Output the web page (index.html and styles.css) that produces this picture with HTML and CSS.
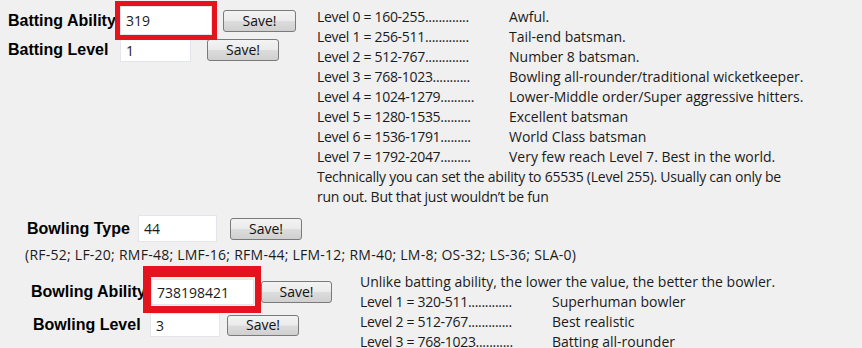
FILE: index.html
```html
<!DOCTYPE html>
<html>
<head>
<meta charset="utf-8">
<link rel="stylesheet" href="styles.css">
</head>
<body>
<div class="top">
  <div class="top-left">
    <div class="row row-bat-ability">
      <label class="lbl lbl-bat-ability">Batting Ability</label>
      <span class="hl hl-one"><input class="field field-bat-ability" value="319"></span>
      <button class="btn btn-bat-ability">Save!</button>
    </div>
    <div class="row row-bat-level">
      <label class="lbl lbl-bat-level">Batting Level</label>
      <input class="field field-bat-level" value="1">
      <button class="btn btn-bat-level">Save!</button>
    </div>
  </div>
  <div class="info info-bat">
    <span class="rng">Level 0 = 160-255.............</span><span>Awful.</span>
    <span class="rng">Level 1 = 256-511.............</span><span>Tail-end batsman.</span>
    <span class="rng">Level 2 = 512-767.............</span><span>Number 8 batsman.</span>
    <span class="rng">Level 3 = 768-1023...........</span><span>Bowling all-rounder/traditional wicketkeeper.</span>
    <span class="rng">Level 4 = 1024-1279..........</span><span>Lower-Middle order/Super aggressive hitters.</span>
    <span class="rng">Level 5 = 1280-1535.........</span><span>Excellent batsman</span>
    <span class="rng">Level 6 = 1536-1791.........</span><span>World Class batsman</span>
    <span class="rng">Level 7 = 1792-2047.........</span><span>Very few reach Level 7. Best in the world.</span>
    <p class="span-all note">Technically you can set the ability to 65535 (Level 255). Usually can only be<br>run out. But that just wouldn’t be fun</p>
  </div>
</div>

<div class="row row-bowl-type">
  <label class="lbl lbl-bowl-type">Bowling Type</label>
  <input class="field field-bowl-type" value="44">
  <button class="btn btn-bowl-type">Save!</button>
</div>
<p class="types">(RF-52; LF-20; RMF-48; LMF-16; RFM-44; LFM-12; RM-40; LM-8; OS-32; LS-36; SLA-0)</p>

<div class="bottom">
  <div class="bottom-left">
    <div class="row row-bowl-ability">
      <label class="lbl lbl-bowl-ability">Bowling Ability</label>
      <span class="hl hl-two"><input class="field field-bowl-ability" value="738198421"></span>
      <button class="btn btn-bowl-ability">Save!</button>
    </div>
    <div class="row row-bowl-level">
      <label class="lbl lbl-bowl-level">Bowling Level</label>
      <input class="field field-bowl-level" value="3">
      <button class="btn btn-bowl-level">Save!</button>
    </div>
  </div>
  <div class="info info-bowl">
    <p class="span-all">Unlike batting ability, the lower the value, the better the bowler.</p>
    <span class="rng">Level 1 = 320-511.............</span><span>Superhuman bowler</span>
    <span class="rng">Level 2 = 512-767.............</span><span>Best realistic</span>
    <span class="rng">Level 3 = 768-1023...........</span><span>Batting all-rounder</span>
  </div>
</div>
</body>
</html>
```

FILE: styles.css
```css
html, body {
  margin: 0;
  padding: 0;
  background: #f0f0f0;
}
body {
  width: 862px;
  height: 348px;
  overflow: hidden;
  font-family: "Open Sans", "Noto Sans", sans-serif;
  font-size: 14px;
  color: #1b1b1b;
}
p { margin: 0; }

.top { display: flex; }
.top-left { width: 317px; padding-top: 6px; flex: none; }

.row { display: flex; align-items: center; }

.lbl {
  font-family: "Liberation Sans", Arial, sans-serif;
  font-weight: bold;
  font-size: 16px;
  color: #000;
  box-sizing: border-box;
  flex: none;
  white-space: nowrap;
}

.field {
  box-sizing: border-box;
  border: 1px solid #e2e6ea;
  background: #fff;
  font-family: "Open Sans", "Noto Sans", sans-serif;
  font-size: 14px;
  color: #1b1b1b;
  padding: 0 0 0 5px;
  margin: 0;
  outline: none;
  display: block;
}

.btn {
  box-sizing: border-box;
  border: 1px solid #7a7a7a;
  border-radius: 3px;
  background: linear-gradient(#f3f3f3 0%, #ebebeb 48%, #dcdcdc 52%, #d0d0d0 100%);
  font-family: "Open Sans", "Noto Sans", sans-serif;
  font-size: 14px;
  color: #111;
  padding: 0;
  margin: 0;
  line-height: 1;
}

/* highlight annotation boxes */
.hl { position: relative; display: block; }
.hl::after {
  content: "";
  position: absolute;
  border-style: solid;
  border-color: #e3141e;
  pointer-events: none;
}
.hl-one::after { left: -5px; right: -5px; top: -5px; bottom: -5px; border-width: 5px; }
.hl-two::after { left: -8px; right: -7px; top: -13px; bottom: -8px; border-width: 11px 6px 7px 8px; }

/* batting */
.row-bat-ability { height: 29px; }
.lbl-bat-ability { width: 120px; padding-left: 8px; }
.field-bat-ability { width: 92px; height: 29px; }
.btn-bat-ability { margin-left: 11px; width: 73px; height: 22px; }

.row-bat-level { height: 24px; margin-top: 3px; }
.lbl-bat-level { width: 120px; padding-left: 8px; }
.field-bat-level { width: 71px; height: 24px; }
.btn-bat-level { margin-left: 16px; width: 72px; height: 22px; }

.info {
  display: grid;
  grid-template-columns: 192px auto;
  line-height: 20px;
  align-content: start;
  white-space: nowrap;
}
.span-all { grid-column: 1 / -1; }
.info-bat { padding-top: 7px; }
.rng { letter-spacing: -0.3px; }
.note { letter-spacing: -0.25px; }

/* bowling type */
.row-bowl-type { height: 27px; margin-top: 8px; }
.lbl-bowl-type { width: 138px; padding-left: 27px; }
.field-bowl-type { width: 79px; height: 27px; }
.btn-bowl-type { margin-left: 13px; width: 72px; height: 22px; }

.types { padding-left: 25px; line-height: 20px; margin-top: 3px; letter-spacing: 0.25px; }

.bottom { display: flex; }
.bottom-left { width: 360px; flex: none; }
.info-bowl { margin-top: 7px; }

.row-bowl-ability { height: 26px; margin-top: 14px; }
.lbl-bowl-ability { width: 151px; padding-left: 31px; }
.field-bowl-ability { width: 103px; height: 26px; }
.btn-bowl-ability { margin-left: 7px; width: 71px; height: 22px; }

.row-bowl-level { height: 24px; margin-top: 8px; }
.lbl-bowl-level { width: 150px; padding-left: 33px; }
.field-bowl-level { width: 70px; height: 24px; }
.btn-bowl-level { margin-left: 7px; width: 72px; height: 21px; }
```
